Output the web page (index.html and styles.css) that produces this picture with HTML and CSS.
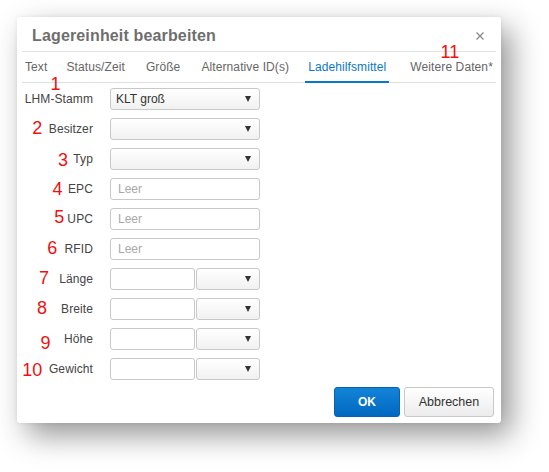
FILE: index.html
```html
<!DOCTYPE html>
<html lang="de">
<head>
<meta charset="utf-8">
<title>Lagereinheit bearbeiten</title>
<link rel="stylesheet" href="styles.css">
</head>
<body>
<div class="page">
  <div class="dialog">
    <div class="header">
      <div class="title">Lagereinheit bearbeiten</div>
      <svg class="close" width="8" height="8" viewBox="0 0 8 8"><path d="M0.5 0.5L7.5 7.5M7.5 0.5L0.5 7.5" stroke="#8a8a8a" stroke-width="1.3" fill="none"/></svg>
    </div>
    <div class="tabs">
      <div class="tab t-text">Text</div>
      <div class="tab">Status/Zeit</div>
      <div class="tab">Größe</div>
      <div class="tab t-alt">Alternative ID(s)</div>
      <div class="tab active">Ladehilfsmittel</div>
      <div class="tab">Weitere Daten*</div>
    </div>
    <div class="form">
      <label class="lbl">LHM-Stamm</label>
      <div class="select"><span>KLT groß</span><span class="arrow"></span></div>

      <label class="lbl">Besitzer</label>
      <div class="select"><span></span><span class="arrow"></span></div>

      <label class="lbl">Typ</label>
      <div class="select"><span></span><span class="arrow"></span></div>

      <label class="lbl">EPC</label>
      <input class="input" type="text" placeholder="Leer">

      <label class="lbl">UPC</label>
      <input class="input" type="text" placeholder="Leer">

      <label class="lbl">RFID</label>
      <input class="input" type="text" placeholder="Leer">

      <label class="lbl">Länge</label>
      <div class="split"><input class="input" type="text"><div class="select"><span></span><span class="arrow"></span></div></div>

      <label class="lbl">Breite</label>
      <div class="split"><input class="input" type="text"><div class="select"><span></span><span class="arrow"></span></div></div>

      <label class="lbl">Höhe</label>
      <div class="split"><input class="input" type="text"><div class="select"><span></span><span class="arrow"></span></div></div>

      <label class="lbl">Gewicht</label>
      <div class="split"><input class="input" type="text"><div class="select"><span></span><span class="arrow"></span></div></div>
    </div>
    <div class="footer">
      <button class="btn btn-primary">OK</button>
      <button class="btn btn-default">Abbrechen</button>
    </div>

    <span class="num n1">1</span>
    <span class="num n2">2</span>
    <span class="num n3">3</span>
    <span class="num n4">4</span>
    <span class="num n5">5</span>
    <span class="num n6">6</span>
    <span class="num n7">7</span>
    <span class="num n8">8</span>
    <span class="num n9">9</span>
    <span class="num n10">10</span>
    <span class="num n11">11</span>
  </div>
</div>
</body>
</html>
```
FILE: styles.css
```css
* { box-sizing: border-box; }
html, body {
  margin: 0;
  padding: 0;
  background: #ffffff;
  min-height: 100%;
  height: 100%;
}
body {
  font-family: "Liberation Sans", Arial, sans-serif;
  color: #444;
}
.page {
  padding: 17px;
  min-height: 100%;
}
.dialog {
  position: relative;
  width: 484px;
  height: 406px;
  background: #fff;
  border-radius: 3px;
  box-shadow: 10px 12px 30px rgba(0, 0, 0, 0.42), 0 0 4px rgba(0, 0, 0, 0.07);
  display: flex;
  flex-direction: column;
}
.header {
  height: 35px;
  margin: 0 5px;
  border-bottom: 1px solid #e2e2e2;
  display: flex;
  align-items: center;
  justify-content: space-between;
  padding: 3px 12px 0 10px;
}
.title {
  font-size: 16px;
  font-weight: bold;
  color: #6e6e6e;
  letter-spacing: 0.15px;
}
.close {
  display: block;
}
.tabs {
  margin: 0 5px;
  height: 31px;
  border-bottom: 1px solid #e0e0e0;
  display: flex;
  gap: 15px;
}
.tab {
  height: 31px;
  padding: 2px 3px 0;
  line-height: 27px;
  font-size: 12px;
  color: #666;
  border-bottom: 2px solid transparent;
  white-space: nowrap;
  letter-spacing: 0.1px;
}
.t-text { margin-right: -2px; }
.t-alt { margin-right: -2px; }
.tab.active {
  color: #0a78c8;
  border-bottom-color: #0a78c8;
  margin-right: 3px;
}
.form {
  display: grid;
  grid-template-columns: 76px 150px;
  grid-auto-rows: 22px;
  column-gap: 17px;
  row-gap: 8px;
  padding-top: 5px;
}
.lbl {
  font-size: 12px;
  color: #444;
  text-align: right;
  line-height: 22px;
  white-space: nowrap;
  letter-spacing: 0.1px;
}
.select, .input {
  height: 22px;
  border: 1px solid #c8c8c8;
  border-radius: 3px;
  font-family: "Liberation Sans", Arial, sans-serif;
  font-size: 12px;
  color: #333;
}
.select {
  display: flex;
  align-items: center;
  justify-content: space-between;
  padding: 0 8px 0 5px;
  background: linear-gradient(#ffffff, #f1f1f1);
}
.arrow {
  width: 0;
  height: 0;
  border-left: 3.5px solid transparent;
  border-right: 3.5px solid transparent;
  border-top: 6px solid #333;
}
.input {
  width: 100%;
  margin: 0;
  padding: 0 7px;
  background: #fff;
  outline: none;
}
.input::placeholder {
  color: #a8a8a8;
}
.split {
  display: grid;
  grid-template-columns: 85px 64px;
  column-gap: 1px;
}
.footer {
  margin-top: 7px;
  padding: 0 7px 6px;
  display: flex;
  justify-content: flex-end;
  gap: 4px;
}
.btn {
  height: 30px;
  border-radius: 3px;
  font-family: "Liberation Sans", Arial, sans-serif;
  cursor: pointer;
  padding: 0;
}
.btn-primary {
  width: 66px;
  border: 1px solid #0862ad;
  background: linear-gradient(#1383d8, #0069bf);
  color: #fff;
  font-weight: bold;
  font-size: 12px;
}
.btn-default {
  width: 90px;
  border: 1px solid #c9c9c9;
  background: linear-gradient(#ffffff, #ececec);
  color: #333;
  font-size: 12.5px;
}
.num {
  position: absolute;
  width: 24px;
  text-align: center;
  font-family: "Liberation Sans", Arial, sans-serif;
  font-size: 18px;
  line-height: 18px;
  color: #f01010;
}
.n1 { left: 26.5px; top: 57.7px; }
.n2 { left: 8.2px; top: 101.7px; }
.n3 { left: 34px; top: 133.7px; }
.n4 { left: 28.5px; top: 163.4px; }
.n5 { left: 30.2px; top: 190.7px; }
.n6 { left: 23.2px; top: 221.7px; }
.n7 { left: 15px; top: 252.4px; }
.n8 { left: 13px; top: 282.4px; }
.n9 { left: 16.5px; top: 316.7px; }
.n10 { left: 3.2px; top: 344px; }
.n11 { left: 420.8px; top: 25.7px; }
```
